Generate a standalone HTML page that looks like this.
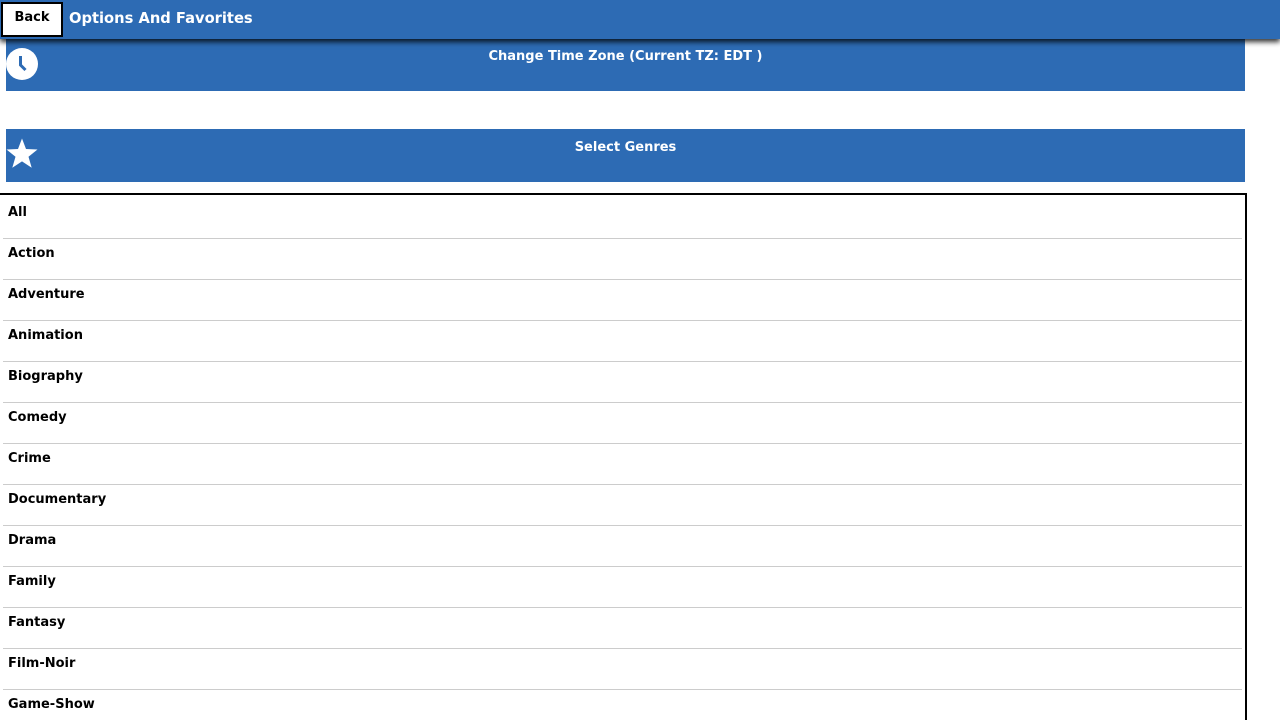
<!DOCTYPE html>
<html style="overflow:hidden"><head><style>
html,body{margin:0;width:1280px;height:720px;overflow:hidden}
body{background:#fff;font-family:"DejaVu Sans",Verdana,sans-serif;font-weight:bold;position:relative}
.hdr{position:absolute;left:0;top:0;width:1280px;height:39px;background:#2d6bb4;box-shadow:0 3px 5px rgba(0,0,0,.8);z-index:2}
.back{position:absolute;left:1px;top:2px;width:58px;height:31px;border:2px solid #000;background:#fff;font-size:13px;color:#000;text-align:center;line-height:27px}
.title{position:absolute;left:69px;top:10px;color:#fff;font-size:14.7px}
.pan{position:absolute;left:6px;width:1239px;background:#2d6bb4;color:#fff;font-size:13px;text-align:center}
.list{position:absolute;left:0;top:193px;width:1245px;height:522px;padding-top:3px;border-top:2px solid #000;border-right:2px solid #000;overflow:hidden}
.row{height:40px;border-bottom:1px solid #ccc;margin:0 3px 0 3px;font-size:13px;padding-left:5px;line-height:30px;box-sizing:content-box}
</style></head><body>
<div class="hdr"><div class="back">Back</div><div class="title">Options And Favorites</div></div>
<div class="pan" style="top:39px;height:52px"><div style="position:absolute;left:0;right:0;top:10px">Change Time Zone (Current TZ: EDT )</div>
<svg style="position:absolute;left:0;top:9px" width="32" height="32" viewBox="0 0 32 32"><circle cx="16" cy="16" r="16" fill="#fff"/><path d="M14.5 8v9l5 5" stroke="#2d6bb4" stroke-width="3" fill="none"/></svg></div>
<div class="pan" style="top:129px;height:53px"><div style="position:absolute;left:0;right:0;top:11px">Select Genres</div>
<svg style="position:absolute;left:0;top:9px" width="32" height="32" viewBox="0 0 32 32"><path d="M16 0.5l4 10.5 11.5.5-9 7.2 3.2 11-9.7-6.3-9.7 6.3 3.2-11-9-7.2 11.5-.5z" fill="#fff"/></svg></div>
<div class="list">
<div class="row">All</div><div class="row">Action</div><div class="row">Adventure</div><div class="row">Animation</div><div class="row">Biography</div><div class="row">Comedy</div><div class="row">Crime</div><div class="row">Documentary</div><div class="row">Drama</div><div class="row">Family</div><div class="row">Fantasy</div><div class="row">Film-Noir</div><div class="row">Game-Show</div><div class="row">History</div>
</div>
</body></html>
